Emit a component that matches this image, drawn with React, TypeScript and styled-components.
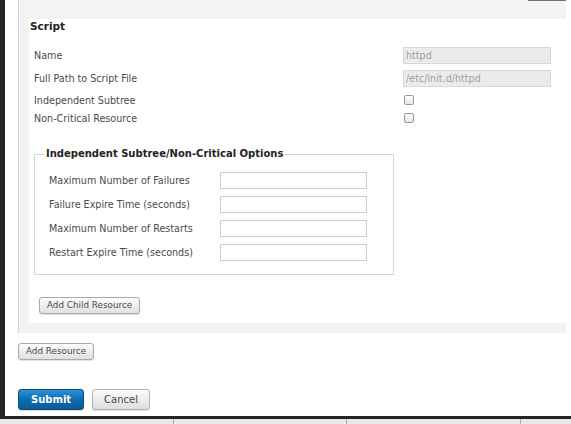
import styled, { createGlobalStyle } from "styled-components";

const GlobalStyle = createGlobalStyle`
  html, body {
    margin: 0;
    padding: 0;
    background: #ffffff;
  }
  body {
    font-family: "DejaVu Sans", Verdana, sans-serif;
  }
`;

const Screen = styled.div`
  width: 571px;
  height: 424px;
  overflow: hidden;
  display: flex;
  flex-direction: column;
`;

const Window = styled.div`
  display: flex;
  height: 416px;
`;

const FrameEdge = styled.div`
  width: 5px;
  background: #242424;
  flex-shrink: 0;
`;

const Main = styled.div`
  flex: 1;
  background: #ffffff;
  padding: 0 5px 0 13px;
  display: flex;
  flex-direction: column;
`;

const BottomEdge = styled.div`
  height: 3px;
  background: #242424;
`;

const Taskbar = styled.div`
  flex: 1;
  display: flex;
  background: #e8e8e8;
`;

const TaskCell = styled.div<{ $w: number }>`
  width: ${(p) => p.$w}px;
  border-right: 1px solid #a9a9a9;
  &:last-child {
    border-right: none;
    flex: 1;
  }
`;

const ResourceBox = styled.div`
  border-left: 1px solid #d6d6d6;
  background: #f3f3f3;
  padding: 0 0 10px 10px;
`;

const TopStrip = styled.div`
  height: 4px;
  display: flex;
  justify-content: flex-end;
`;

const ClippedButton = styled.div`
  width: 38px;
  height: 1px;
  background: #707070;
`;

const Panel = styled.div`
  background: #ffffff;
  padding: 0 0 9px 1px;
`;

const Heading = styled.h3`
  margin: 15px 0 14px;
  font-size: 10.5px;
  line-height: 14px;
  font-weight: bold;
  color: #222;
`;

const FormBody = styled.div`
  padding-left: 4px;
`;

const Row = styled.div<{ $h: number; $gap: number; $labelW: number }>`
  display: flex;
  align-items: center;
  height: ${(p) => p.$h}px;
  margin-bottom: ${(p) => p.$gap}px;
  & > label {
    width: ${(p) => p.$labelW}px;
    flex-shrink: 0;
  }
`;

const Label = styled.label`
  font-size: 9.6px;
  color: #4a4a4a;
  white-space: nowrap;
`;

const TextInput = styled.input<{ $w: number; $disabled?: boolean }>`
  box-sizing: border-box;
  width: ${(p) => p.$w}px;
  height: 17px;
  margin: 0;
  padding: 0 2px;
  border: 1px solid ${(p) => (p.$disabled ? "#d8d8d8" : "#cfcfcf")};
  background: ${(p) => (p.$disabled ? "#ebebeb" : "#ffffff")};
  color: #a0a0a0;
  font-family: "DejaVu Sans", Verdana, sans-serif;
  font-size: 9.6px;
  outline: none;
`;

const Check = styled.input.attrs({ type: "checkbox" })`
  appearance: none;
  margin: 0 0 0 1px;
  width: 10px;
  height: 10px;
  border: 1px solid #9a9a9a;
  border-radius: 2px;
  background: linear-gradient(#ffffff, #e6e6e6);
  box-sizing: border-box;
`;

const Options = styled.fieldset`
  margin: 21px 0 0;
  width: 360px;
  box-sizing: border-box;
  border: 1px solid #d4d4d4;
  padding: 0 0 13px 14px;
`;

const Legend = styled.legend`
  margin-left: -5px;
  padding: 0 2px;
  font-size: 10px;
  line-height: 12px;
  font-weight: bold;
  color: #222;
`;

const OptionRows = styled.div`
  padding-top: 12px;
  & > div:last-child {
    margin-bottom: 0;
  }
`;

const SmallButton = styled.button<{ $ml?: number }>`
  display: block;
  height: 17px;
  margin-left: ${(p) => p.$ml ?? 0}px;
  padding: 0 7px;
  border: 1px solid #a8a8a8;
  border-radius: 3px;
  background: linear-gradient(#fdfdfd, #e0e0e0);
  box-shadow: 0 1px 1px rgba(0, 0, 0, 0.12);
  color: #4a4a4a;
  font-family: "DejaVu Sans", Verdana, sans-serif;
  font-size: 8.8px;
  line-height: 15px;
`;

const ChildButtonWrap = styled.div`
  margin-top: 22px;
`;

const AddResourceWrap = styled.div`
  margin-top: 10px;
`;

const Actions = styled.div`
  display: flex;
  gap: 8px;
  margin-top: 29px;
`;

const ActionButton = styled.button<{ $primary?: boolean }>`
  height: 21px;
  padding: 0 ${(p) => (p.$primary ? 12 : 11)}px;
  border-radius: 3px;
  font-family: "DejaVu Sans", Verdana, sans-serif;
  font-size: 10px;
  font-weight: ${(p) => (p.$primary ? "bold" : "normal")};
  color: ${(p) => (p.$primary ? "#ffffff" : "#4a4a4a")};
  border: 1px solid ${(p) => (p.$primary ? "#0a4f82" : "#b4b4b4")};
  background: ${(p) =>
    p.$primary
      ? "linear-gradient(#2f8fd8, #0b6aae 55%, #0a5c98)"
      : "linear-gradient(#fbfbfb, #dedede)"};
  box-shadow: 0 1px 1px rgba(0, 0, 0, 0.15);
`;

const scriptRows = [
  { label: "Name", kind: "text", value: "httpd", h: 17, gap: 6 },
  { label: "Full Path to Script File", kind: "text", value: "/etc/init.d/httpd", h: 17, gap: 4 },
  { label: "Independent Subtree", kind: "check", h: 18, gap: 0 },
  { label: "Non-Critical Resource", kind: "check", h: 18, gap: 0 },
];

const optionRows = [
  "Maximum Number of Failures",
  "Failure Expire Time (seconds)",
  "Maximum Number of Restarts",
  "Restart Expire Time (seconds)",
];

export default function App() {
  return (
    <>
      <GlobalStyle />
      <Screen>
        <Window>
          <FrameEdge />
          <Main>
            <ResourceBox>
              <TopStrip>
                <ClippedButton />
              </TopStrip>
              <Panel>
                <Heading>Script</Heading>
                <FormBody>
                  {scriptRows.map((r) => (
                    <Row key={r.label} $h={r.h} $gap={r.gap} $labelW={369}>
                      <Label>{r.label}</Label>
                      {r.kind === "text" ? (
                        <TextInput $w={148} $disabled readOnly defaultValue={r.value} />
                      ) : (
                        <Check />
                      )}
                    </Row>
                  ))}
                  <Options>
                    <Legend>Independent Subtree/Non-Critical Options</Legend>
                    <OptionRows>
                      {optionRows.map((l) => (
                        <Row key={l} $h={17} $gap={7} $labelW={171}>
                          <Label>{l}</Label>
                          <TextInput $w={147} />
                        </Row>
                      ))}
                    </OptionRows>
                  </Options>
                  <ChildButtonWrap>
                    <SmallButton $ml={5}>Add Child Resource</SmallButton>
                  </ChildButtonWrap>
                </FormBody>
              </Panel>
            </ResourceBox>
            <AddResourceWrap>
              <SmallButton>Add Resource</SmallButton>
            </AddResourceWrap>
            <Actions>
              <ActionButton $primary>Submit</ActionButton>
              <ActionButton>Cancel</ActionButton>
            </Actions>
          </Main>
        </Window>
        <BottomEdge />
        <Taskbar>
          <TaskCell $w={173} />
          <TaskCell $w={172} />
          <TaskCell $w={173} />
          <TaskCell $w={53} />
        </Taskbar>
      </Screen>
    </>
  );
}
